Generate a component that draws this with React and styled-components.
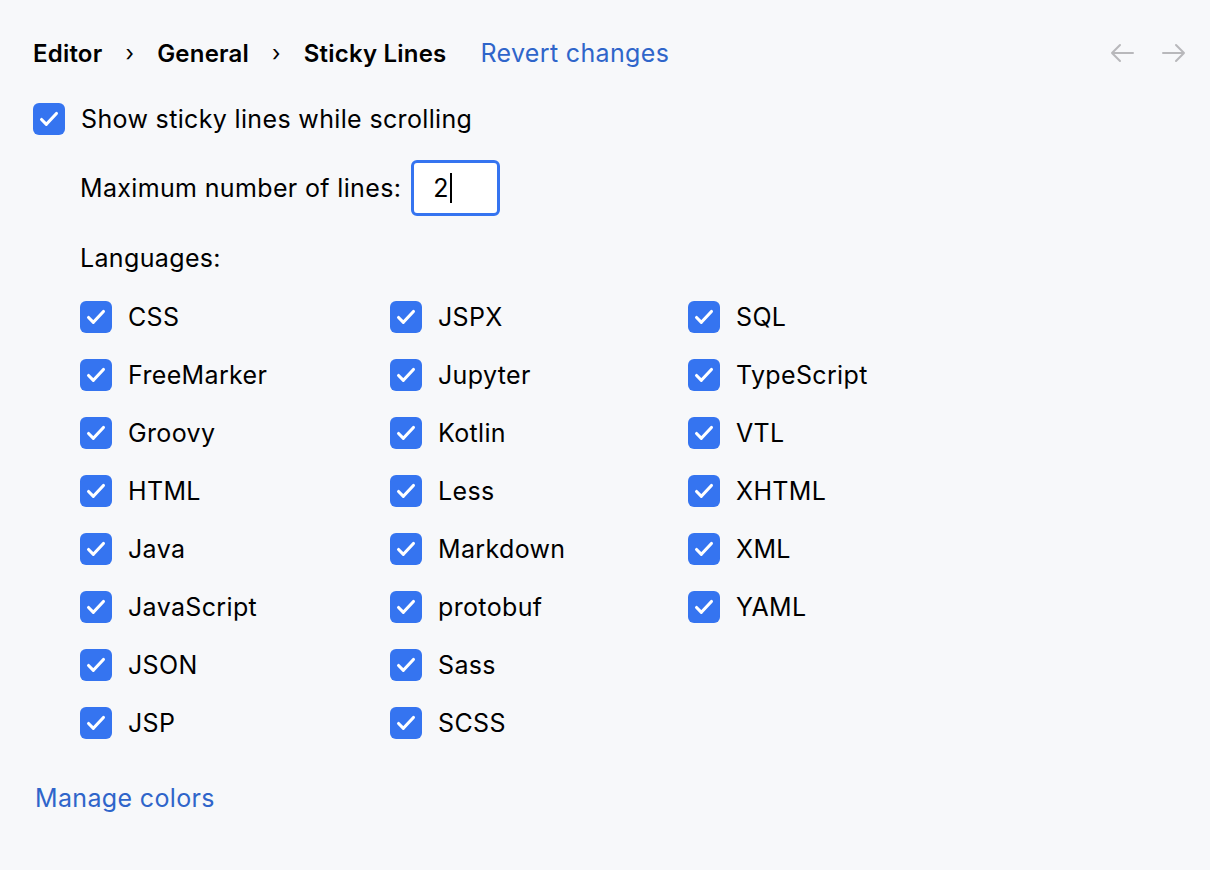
import styled, { createGlobalStyle } from "styled-components";

const Global = createGlobalStyle`
  body {
    margin: 0;
    background: #f7f8fa;
    font-family: Inter, "Noto Sans", sans-serif;
    color: #000;
    letter-spacing: 0.35px;
  }
`;

const Page = styled.div`
  width: 1210px;
  height: 870px;
  box-sizing: border-box;
  padding: 34px 33px 0 33px;
  display: flex;
  flex-direction: column;
`;

const Header = styled.div`
  display: flex;
  align-items: center;
  height: 38px;
  font-size: 24px;
`;

const Crumb = styled.span`
  font-weight: 600;
  letter-spacing: 0.2px;
`;

const Sep = styled.span`
  margin: 0 23px;
  font-size: 22px;
`;

const Link = styled.span`
  color: #2f65ca;
  font-size: 25px;
  margin-left: ${(p) => p.$ml || 0}px;
`;

const Nav = styled.div`
  margin-left: auto;
  display: flex;
  gap: 24px;
  margin-right: -11px;
`;

const Box = styled.span`
  width: ${(p) => p.$size}px;
  height: ${(p) => p.$size}px;
  border-radius: 6px;
  background: #3574f0;
  display: inline-flex;
  align-items: center;
  justify-content: center;
  flex-shrink: 0;
`;

const Check = ({ size = 32 }) => (
  <Box $size={size}>
    <svg width="24" height="24" viewBox="0 0 20 20" fill="none">
      <path d="M3.8 10.4l4 4 8.4-9" stroke="#fff" strokeWidth="2.6" strokeLinecap="round" strokeLinejoin="round" />
    </svg>
  </Box>
);

const Row = styled.div`
  display: flex;
  align-items: center;
  gap: 16px;
  font-size: 25px;
  height: 32px;
  margin-top: ${(p) => p.$mt || 0}px;
`;

const Indent = styled.div`
  padding-left: 47px;
  display: flex;
  flex-direction: column;
`;

const FieldRow = styled.div`
  display: flex;
  align-items: center;
  gap: 11px;
  font-size: 25px;
  margin-top: 25px;
`;

const Input = styled.div`
  width: 82px;
  height: 50px;
  border: 3px solid #3574f0;
  border-radius: 6px;
  background: #fff;
  display: flex;
  align-items: center;
  padding-left: 19px;
  box-sizing: content-box;
  margin-left: -1px;
  width: 64px;
`;

const Caret = styled.span`
  width: 2px;
  height: 30px;
  background: #000;
  margin-left: 1px;
`;

const Label = styled.div`
  font-size: 25px;
  margin-top: 27px;
`;

const Grid = styled.div`
  display: grid;
  grid-template-columns: 310px 298px 300px;
  grid-auto-flow: column;
  grid-template-rows: repeat(8, 32px);
  row-gap: 26px;
  margin-top: 28px;
`;

const Arrow = ({ d }) => (
  <svg width="28" height="28" viewBox="0 0 28 28" fill="none" stroke="#b8b8bb" strokeWidth="2" strokeLinecap="round" strokeLinejoin="round">
    <path d={d} />
  </svg>
);

const langs = [
  "CSS", "FreeMarker", "Groovy", "HTML", "Java", "JavaScript", "JSON", "JSP",
  "JSPX", "Jupyter", "Kotlin", "Less", "Markdown", "protobuf", "Sass", "SCSS",
  "SQL", "TypeScript", "VTL", "XHTML", "XML", "YAML",
];

export default function App() {
  return (
    <>
      <Global />
      <Page>
        <Header>
          <Crumb>Editor</Crumb>
          <Sep>›</Sep>
          <Crumb>General</Crumb>
          <Sep>›</Sep>
          <Crumb>Sticky Lines</Crumb>
          <Link $ml={34}>Revert changes</Link>
          <Nav>
            <Arrow d="M25 14H4M12 6l-8 8 8 8" />
            <Arrow d="M3 14h21M16 6l8 8-8 8" />
          </Nav>
        </Header>
        <Row $mt={31}>
          <Check />
          Show sticky lines while scrolling
        </Row>
        <Indent>
          <FieldRow>
            Maximum number of lines:
            <Input>2<Caret /></Input>
          </FieldRow>
          <Label>Languages:</Label>
          <Grid>
            {langs.map((l) => (
              <Row key={l}>
                <Check />
                {l}
              </Row>
            ))}
          </Grid>
        </Indent>
        <Link style={{ marginTop: 44, marginLeft: 2 }}>Manage colors</Link>
      </Page>
    </>
  );
}
